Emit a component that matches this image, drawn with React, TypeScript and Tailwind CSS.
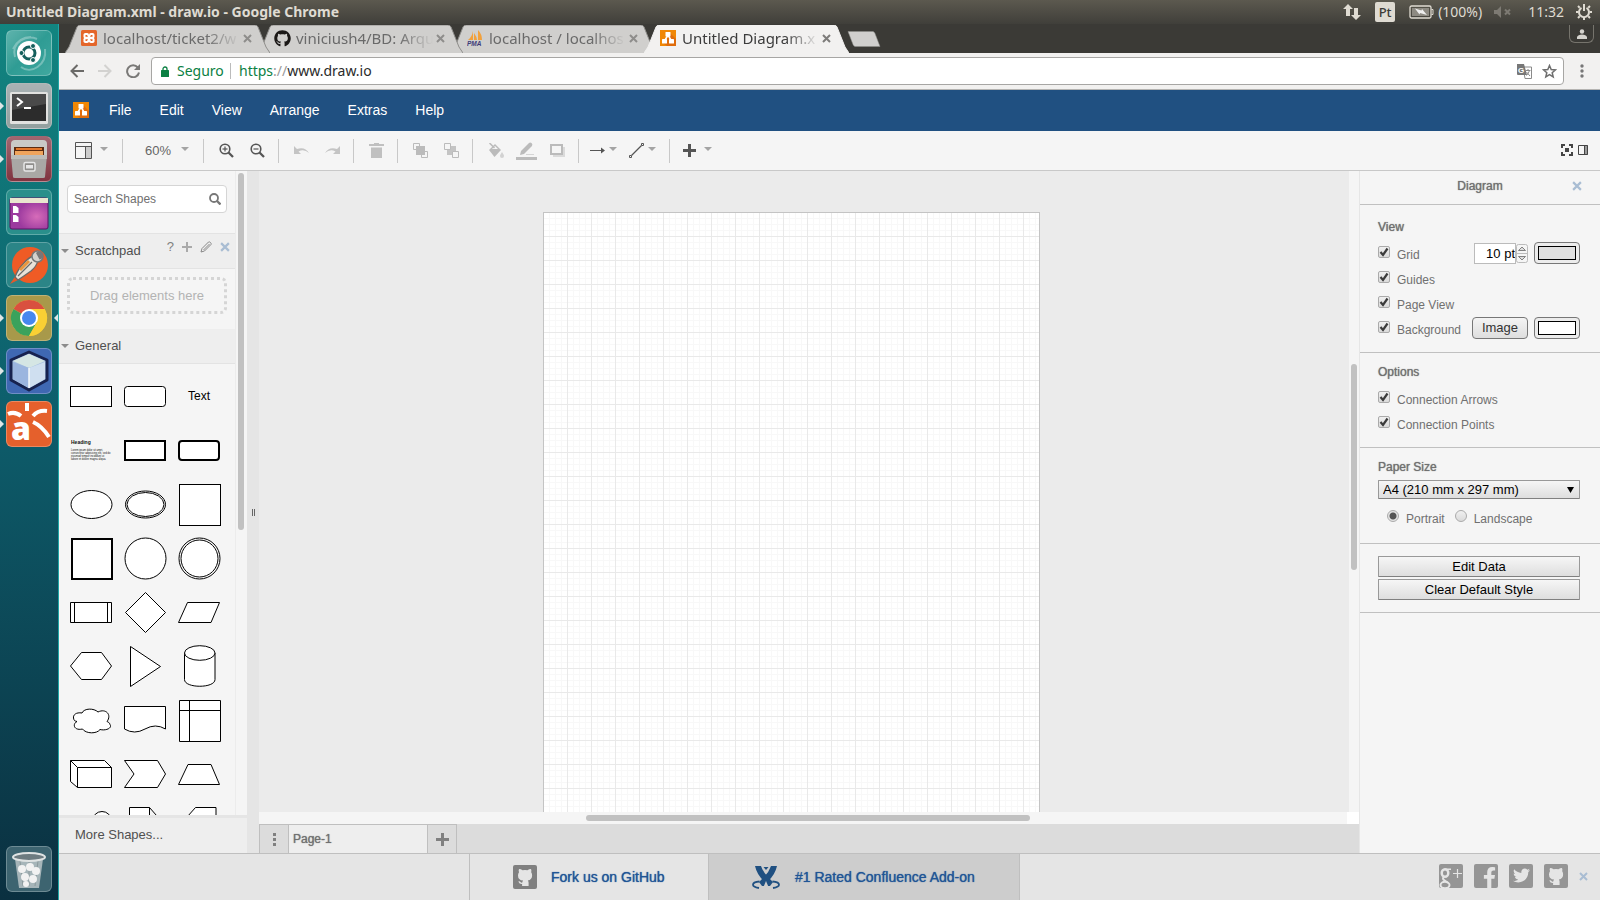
import React from "react";
import { FaGithub, FaFacebookF, FaTwitter } from "react-icons/fa";

const ubuntu = "font-['Noto_Sans',sans-serif]";
const fauxBold = "[text-shadow:0_0_1px_currentColor]";

/* ---------- small shared drawings ---------- */

function DrawioLogo() {
  return (
    <svg width="16" height="16" viewBox="0 0 16 16" aria-hidden="true">
      <rect width="16" height="16" fill="#f08705" />
      <path d="M11 4L16 9v7H7l-4-3z" fill="#df6c0c" />
      <path d="M8 5L4.500 11M8 5l3.500 6" stroke="#fff" strokeWidth="1.500" />
      <rect x="5.500" y="2" width="5" height="4.500" rx=".6" fill="#fff" />
      <rect x="2" y="9" width="5" height="4.500" rx=".6" fill="#fff" />
      <rect x="9" y="9" width="5" height="4.500" rx=".6" fill="#fff" />
    </svg>
  );
}

function XamppLogo() {
  return (
    <svg width="16" height="16" viewBox="0 0 16 16" aria-hidden="true">
      <rect width="16" height="16" rx="1.500" fill="#e4662a" />
      <g fill="#fff">
        <rect x="2.500" y="3" width="5.500" height="5.500" rx="1.800" />
        <rect x="8" y="3" width="5.500" height="5.500" rx="1.800" />
        <rect x="2.500" y="7.500" width="5.500" height="5.500" rx="1.800" />
        <rect x="8" y="7.500" width="5.500" height="5.500" rx="1.800" />
        <rect x="6" y="6" width="4" height="4" />
      </g>
      <g fill="#e4662a">
        <path d="M4.500 5h1.500l1 1.800H4.500zM11.500 5H10L9 6.800h2.500zM4.500 11h1.500l1-1.800H4.500zM11.500 11H10L9 9.200h2.500z" />
      </g>
    </svg>
  );
}

function Octocat() {
  return (
    <svg width="24" height="24" viewBox="0 0 24 24" fill="currentColor" aria-hidden="true">
      <path d="M6 4q2 0 3.500 1.200 2.500-.5 5 0Q16 4 18 4q.7 1.600.2 3.200 1 1.200.9 3.200 0 4.200-4.300 5 .8.800.8 2.300V21h-6.500v-2Q6.500 19.300 5.300 16.500q1.500-.5 2.200.6.600.700 1.800.500.100-1.200.8-2Q5 15 5 10.400q0-2 1-3.200Q5.300 5.600 6 4z" />
    </svg>
  );
}

function Caret() {
  return (
    <svg width="8" height="4" viewBox="0 0 8 4" className="mb-1 shrink-0" aria-hidden="true">
      <path d="M0 0h8L4 4z" fill="#a4a4a4" />
    </svg>
  );
}

function Cross({ size, color }: { size: number; color: string }) {
  return (
    <svg width={size} height={size} viewBox="0 0 9 9" aria-hidden="true">
      <path d="M1 1l7 7M8 1L1 8" stroke={color} strokeWidth="2" />
    </svg>
  );
}

/* ---------- desktop panel ---------- */

function DesktopPanel() {
  return (
    <header className={`flex h-6 shrink-0 items-center justify-between bg-linear-to-b from-[#5c594f] to-[#403f3a] pl-1.5 pr-2 text-[#dfdbd2] ${ubuntu}`}>
      <span className="text-sm font-bold leading-6">Untitled Diagram.xml - draw.io - Google Chrome</span>
      <div className="flex items-center text-sm leading-6">
        <svg width="18" height="18" viewBox="0 0 18 18" className="mr-3.5" fill="#dfdbd2">
          <path d="M5 1l5 5H7v7H3V6H0zM13 17l-5-5h3V5h4v7h3z" />
        </svg>
        <span className="mr-3.5 flex h-5 w-5 items-center justify-center rounded-xs bg-[#dfdbd2] text-[13px] font-medium text-[#3c3b37]">Pt</span>
        <svg width="25" height="14" viewBox="0 0 25 14" className="mr-1">
          <rect x="1" y="1" width="21" height="12" rx="1.500" fill="none" stroke="#dfdbd2" strokeWidth="1.300" />
          <rect x="3" y="3" width="17" height="8" fill="#8d8a82" />
          <path d="M22.500 4.500h1.500v5h-1.500" fill="none" stroke="#dfdbd2" />
          <path d="M6 3.500l6.500 2 .5-1.500 5 6-7-2-.5 1.500z" fill="#eee" />
        </svg>
        <span className="mr-3">(100%)</span>
        <svg width="18" height="14" viewBox="0 0 18 14" className="mr-4">
          <path d="M0 5h3l4-4v12L3 9H0z" fill="#7d7a73" />
          <path d="M11 4.500l5 5M16 4.500l-5 5" stroke="#7d7a73" strokeWidth="2" />
        </svg>
        <span className="mr-3">11:32</span>
        <svg width="16" height="16" viewBox="0 0 16 16" fill="none" stroke="#dfdbd2">
          <path d="M5.500 3.800a5 5 0 1 0 5 0" strokeWidth="2" />
          <path d="M8 0v7" strokeWidth="2" />
          <path d="M2 2l1.700 1.700M14 2l-1.700 1.700M0 8h2.500M13.500 8H16M2 14l1.700-1.700M14 14l-1.700-1.700M8 13v3" strokeWidth="2" />
        </svg>
      </div>
    </header>
  );
}

/* ---------- launcher ---------- */

function LauncherTile({ label, tone, running, focused, children }: { label: string; tone: string; running?: boolean; focused?: boolean; children: React.ReactNode }) {
  return (
    <div className="flex items-center">
      <svg width="6" height="8" viewBox="0 0 6 8" className="shrink-0">
        {running && <path d="M0 0l4 4-4 4z" fill="#dfe6e6" />}
      </svg>
      <button type="button" aria-label={label} className={`flex h-[46px] w-[46px] shrink-0 items-center justify-center rounded-md border border-white/25 ${tone}`}>
        <svg width="44" height="44" viewBox="0 0 44 44" className="overflow-visible" aria-hidden="true">{children}</svg>
      </button>
      <svg width="6" height="8" viewBox="0 0 6 8" className="shrink-0">
        {focused && <path d="M6 0L2 4l4 4z" fill="#dfe6e6" />}
      </svg>
    </div>
  );
}

function Launcher() {
  return (
    <nav aria-label="Launcher" className="flex w-[59px] shrink-0 flex-col justify-between border-r border-[#1fa5a5] bg-linear-to-b from-[#128580] via-[#0d5d6b] via-45% to-[#0a3040] pb-2 pt-1.5">
      <div className="flex flex-col gap-[7px]">
        <LauncherTile label="Search" tone="bg-linear-to-br from-[#5db3ac] via-[#2f9c94] to-[#3fa79f]">
          <path d="M8 26C4 10 20 4 30 8M14 36C24 44 40 34 38 18M6 18c4-8 10-12 18-12" fill="none" stroke="#fff" strokeOpacity=".3" strokeWidth="2" />
          <circle cx="22" cy="22" r="12" fill="#fff" />
          <circle cx="22" cy="22" r="6" fill="none" stroke="#155f5c" strokeWidth="3" />
          <g fill="#155f5c" stroke="#fff" strokeWidth="1"><circle cx="14.500" cy="22" r="2.500" /><circle cx="26" cy="15" r="2.500" /><circle cx="26" cy="29" r="2.500" /></g>
        </LauncherTile>
        <LauncherTile label="Terminal" running tone="bg-linear-to-b from-[#a9b2b4] to-[#93a09f]">
          <rect x="3" y="8" width="38" height="32" rx="1.500" fill="#e2e2e0" />
          <rect x="5" y="10" width="34" height="27" fill="#2c2c2c" />
          <path d="M5 10h34v10L5 26z" fill="#4a4a4a" />
          <path d="M10 14l5 4-5 4M17 24h7" fill="none" stroke="#fff" strokeWidth="2" />
        </LauncherTile>
        <LauncherTile label="Files" running tone="bg-linear-to-b from-[#a06670] to-[#803440]">
          <path d="M4 7q0-4 4-4h28q4 0 4 4v12H4z" fill="#c9c9c6" />
          <path d="M7 10h30v9H7z" fill="#5b2b10" />
          <path d="M9 11h26v2H9z" fill="#e2762b" /><path d="M8 14h28v5H8z" fill="#f0a45c" />
          <path d="M4 18h36l-2 22q0 1-2 1H8q-2 0-2-1z" fill="#a9a8a5" />
          <path d="M4 18h36v4H4z" fill="#bdbcb9" />
          <rect x="17" y="25.500" width="11" height="8.500" rx="1.500" fill="#8f8e8b" stroke="#e6e6e6" strokeWidth="1.500" />
          <rect x="19" y="28" width="7" height="3.500" fill="#e6e6e6" />
        </LauncherTile>
        <LauncherTile label="Workspace" tone="bg-[#2a8f8b]">
          <defs><radialGradient id="ws" cx=".7" cy=".6"><stop offset="0" stopColor="#d66cb9" /><stop offset="1" stopColor="#9c3a9f" /></radialGradient></defs>
          <rect x="3" y="8" width="38" height="31" rx="2" fill="url(#ws)" stroke="#5a1465" />
          <path d="M3 8h38v5H3z" fill="#e9e5cf" />
          <path d="M6 16h3l2.500 2v5H6zM6 25h3l2.500 2v5H6z" fill="#fff" />
        </LauncherTile>
        <LauncherTile label="Postman" tone="bg-[#2b8587]">
          <circle cx="23" cy="22" r="18" fill="#ef5b25" />
          <path d="M3 41l6-9 4 4z" fill="#e2592b" />
          <path d="M8 34q3-8 9-14 5-6 10-7l4 4q-1 6-7 11-7 5-13 9z" fill="#e8e2d8" stroke="#6a6a68" strokeWidth="1.300" />
          <path d="M13 27l9-9" stroke="#e9953d" strokeWidth="3" />
          <path d="M11 33l14-14" stroke="#6a6a68" strokeWidth="1.300" />
          <circle cx="30.500" cy="13.500" r="5.500" fill="#d4d1cc" stroke="#777" strokeWidth="1.500" />
          <path d="M29 10a4 4 0 1 1 3.500 6.500z" fill="#777" />
        </LauncherTile>
        <LauncherTile label="Chrome" running focused tone="bg-[#a8994a]">
          <circle cx="22" cy="22" r="18" fill="#f6c934" />
          <path d="M22 22L6.400 13A18 18 0 0 1 37.600 13z" fill="#d9503f" />
          <path d="M6.400 13A18 18 0 0 0 22 40l7.800-13.500L22 22z" fill="#3ba25c" />
          <path d="M22 13h15.600A18 18 0 0 1 22 40l8-14z" fill="#f9d034" />
          <circle cx="22" cy="22" r="9" fill="#fff" /><circle cx="22" cy="22" r="7" fill="#4687ee" />
        </LauncherTile>
        <LauncherTile label="NetBeans" running tone="bg-[#3f68b3]">
          <path d="M22 3L40 11v20L22 41 4 31V11z" fill="#a9c2e2" stroke="#17224f" strokeWidth="3" strokeLinejoin="round" />
          <path d="M22 5L38 12 22 19 6 12z" fill="#d5e6e4" />
          <path d="M6 13l16 6v20L6 30z" fill="#9bb5df" />
          <path d="M38 13l-16 6v20l16-9z" fill="#cfdff0" />
          <path d="M22 19v20" stroke="#f4f8fb" strokeWidth="1.500" />
        </LauncherTile>
        <LauncherTile label="Astah" running tone="bg-[#e5602c]">
          <path d="M20 1v8M1 12q7-3 13 2M40 9q-9-1-14 5M26 20q9 4 16 15" fill="none" stroke="#fff" strokeWidth="4" />
          <text x="4" y="38" fontFamily="Open Sans" fontWeight="800" fontSize="32" fill="#fff">a</text>
        </LauncherTile>
      </div>
      <LauncherTile label="Trash" tone="bg-[#3d6470]">
        <path d="M8 12h28l-4 29H12z" fill="#c9d0d1" fillOpacity=".75" />
        <path d="M13 14l3 25M22 14v25M31 14l-3 25" stroke="#8b999c" />
        <g fill="#f2f2f2"><circle cx="15" cy="22" r="4" /><circle cx="23" cy="20" r="4" /><circle cx="29" cy="24" r="4" /><circle cx="18" cy="30" r="4" /><circle cx="26" cy="32" r="4" /><circle cx="19" cy="37" r="3" /></g>
        <ellipse cx="22" cy="10" rx="16" ry="4" fill="#6d7b80" stroke="#dfe3e3" strokeWidth="2" />
      </LauncherTile>
    </nav>
  );
}

/* ---------- browser chrome ---------- */

function BrowserTab({ icon, title, layer, active }: { icon: React.ReactNode; title: string; layer: string; active?: boolean }) {
  return (
    <div className={`relative -mr-3 h-7 w-[205px] shrink-0 ${layer}`}>
      <svg className="absolute inset-0 h-full w-full" viewBox="0 0 205 28" preserveAspectRatio="none" aria-hidden="true">
        <path d="M0 28L4 22 12 2q1-2 3-2H190q2 0 3 2L201 22l4 6" fill={active ? "#f2f1f0" : "#d0cfcd"} stroke={active ? "#f2f1f0" : "#8f8e8b"} />
      </svg>
      <div className="relative flex h-full items-center pb-0.5 pl-4 pr-4">
        <span className="flex w-[22px] shrink-0">{icon}</span>
        <span className={`w-[137px] shrink-0 whitespace-nowrap text-[15px] leading-6 [mask-image:linear-gradient(to_right,black_75%,transparent)] ${active ? "text-[#3c3c3c]" : "text-[#6a6a6a]"}`}>{title}</span>
        <button type="button" aria-label={`Close ${title}`} className="ml-[3px] shrink-0"><Cross size={9} color={active ? "#7d7c7a" : "#8e8d8b"} /></button>
      </div>
    </div>
  );
}

function TabStrip() {
  return (
    <div className={`flex h-[29px] shrink-0 items-end justify-between bg-[#3b3a36] pl-1.5 pr-1.5 ${ubuntu}`}>
      <div className="flex">
        <BrowserTab layer="z-30" title="localhost/ticket2/w" icon={<XamppLogo />} />
        <BrowserTab layer="z-20" title="viniciush4/BD: Arqu" icon={<FaGithub size={17} color="#1b1817" />} />
        <BrowserTab layer="z-10" title="localhost / localhos" icon={
          <svg width="17" height="16" viewBox="0 0 17 16">
            <path d="M6 1v9H1q4-3 5-9zM7 3q3 4 3 7H7zM11 0q4 4 4 10h-4z" fill="#f2a13c" />
            <text x="0" y="15.500" fontFamily="Liberation Sans" fontStyle="italic" fontWeight="700" fontSize="6.500" fill="#3f3c78">PMA</text>
          </svg>} />
        <BrowserTab layer="z-40" active title="Untitled Diagram.x" icon={<DrawioLogo />} />
        <button type="button" aria-label="New tab" className="ml-2.5 self-center">
          <svg width="34" height="16" viewBox="0 0 34 16"><path d="M1 .5h25q1 0 2 2l5 13H8q-1 0-2-2z" fill="#d0cfcd" stroke="#8f8e8b" strokeWidth=".5" /></svg>
        </button>
      </div>
      <button type="button" aria-label="User" className="mb-2.5 flex h-[18px] w-[25px] items-center justify-center rounded-b-md border border-t-0 border-[#76746d]">
        <svg width="10" height="10" viewBox="0 0 10 10" fill="#d5d3ce"><circle cx="5" cy="2.500" r="2.200" /><path d="M0 10V8q1-2.500 5-2.500T10 8v2z" /></svg>
      </button>
    </div>
  );
}

function AddressBar() {
  return (
    <div className={`flex h-[37px] shrink-0 items-center border-b border-[#b5b4b2] bg-[#f2f1f0] pl-[11px] pr-4 ${ubuntu}`}>
      <button type="button" aria-label="Back" className="mr-3.5"><svg width="14" height="14" viewBox="0 0 14 14" fill="none" stroke="#6b6a68" strokeWidth="2"><path d="M14 7H2M7.500 1L1.500 7l6 6" /></svg></button>
      <button type="button" aria-label="Forward" className="mr-3.5"><svg width="14" height="14" viewBox="0 0 14 14" fill="none" stroke="#d3d2d0" strokeWidth="2"><path d="M0 7h12M6.500 1l6 6-6 6" /></svg></button>
      <button type="button" aria-label="Reload" className="mr-[11px]"><svg width="14" height="14" viewBox="0 0 14 14"><path d="M11.800 3.500A6 6 0 1 0 13 8.500" fill="none" stroke="#7a7977" strokeWidth="2" /><path d="M14 0v6H8z" fill="#7a7977" /></svg></button>
      <div className="mr-4 flex h-7 min-w-0 flex-1 items-center rounded-sm border border-[#a7a6a4] bg-white pl-[9px] pr-1.5 text-sm">
        <svg width="8" height="11" viewBox="0 0 8 11"><rect y="4" width="8" height="7" rx=".5" fill="#0b8043" /><path d="M2 5V3a2 2 0 0 1 4 0v2" fill="none" stroke="#0b8043" strokeWidth="1.300" /></svg>
        <span className="ml-2 w-[53px] text-[#0b8043]">Seguro</span>
        <span className="mr-2 h-4 w-px bg-[#bbb]" />
        <span className="flex-1 text-[#2b2b2b]"><span className="text-[#0b8043]">https</span><span className="text-[#999]">://</span>www.draw.io</span>
        <svg width="15" height="15" viewBox="0 0 15 15" className="mr-2.5">
          <path d="M6 3h8.500v11.500H8z" fill="#fff" stroke="#8a8a8a" />
          <path d="M0 0h7l3 11H1q-1 0-1-1z" fill="#777" />
          <text x="1" y="9" fontFamily="Liberation Sans" fontWeight="700" fontSize="8" fill="#fff">G</text>
          <path d="M8.500 6.500h5M11 5v1.500M12.500 6.500q-1 3-3 5M9.500 8l3.500 4" stroke="#888" fill="none" />
        </svg>
        <svg width="15" height="15" viewBox="0 0 15 15" fill="none" stroke="#6e6e6e" strokeWidth="1.500"><path d="M7.500 1.500l1.700 4 4.300.4-3.300 2.800 1 4.300-3.700-2.300L3.800 13l1-4.300L1.500 5.900l4.300-.4z" /></svg>
      </div>
      <button type="button" aria-label="Browser menu"><svg width="4" height="14" viewBox="0 0 4 14" fill="#777"><circle cx="2" cy="2" r="1.700" /><circle cx="2" cy="7" r="1.700" /><circle cx="2" cy="12" r="1.700" /></svg></button>
    </div>
  );
}

/* ---------- draw.io bars ---------- */

function MenuBar() {
  return (
    <div className="flex h-[41px] shrink-0 items-center bg-[#205081] pb-0.5 pl-3.5">
      <DrawioLogo />
      <div className="ml-1.5 flex">
        {["File", "Edit", "View", "Arrange", "Extras", "Help"].map((m) => (
          <button key={m} type="button" className="px-3.5 text-sm text-white">{m}</button>
        ))}
      </div>
    </div>
  );
}

function Divider() {
  return <span className="h-6 w-px shrink-0 bg-[#c8c8c8]" />;
}

function Tool({ label, children }: { label: string; children: React.ReactNode }) {
  return (
    <button type="button" aria-label={label} className="flex w-[31px] shrink-0 items-center justify-center">
      {children}
    </button>
  );
}

function ToolGroup({ children }: { children: React.ReactNode }) {
  return (
    <>
      <div className="flex pl-[7px] pr-[5px]">{children}</div>
      <Divider />
    </>
  );
}

function Magnifier({ plus }: { plus?: boolean }) {
  return (
    <svg width="15" height="15" viewBox="0 0 15 15" fill="none" stroke="#555">
      <circle cx="6" cy="6" r="4.800" strokeWidth="1.600" />
      <path d="M9.500 9.500l4.500 4.500" strokeWidth="2.300" />
      <path d="M3.500 6h5" strokeWidth="1.200" />
      {plus && <path d="M6 3.500v5" strokeWidth="1.200" />}
    </svg>
  );
}

function ToolBar() {
  return (
    <div className="flex h-10 shrink-0 items-center border-b border-[#c8c8c8] bg-[#f5f5f5]">
      <button type="button" aria-label="View" className="flex w-[63px] items-center gap-2 pl-4">
        <svg width="17" height="17" viewBox="0 0 17 17"><path d="M11 5h5v11h-5z" fill="#ccc" /><path d="M.5.5h16v16H.5zM.5 4.500h16M10.500 4.500v12" fill="none" stroke="#555" /></svg>
        <Caret />
      </button>
      <Divider />
      <button type="button" className="flex w-20 items-center gap-2.5 pl-[22px] text-[13px] text-[#666]">60%<Caret /></button>
      <Divider />
      <ToolGroup>
        <Tool label="Zoom in"><Magnifier plus /></Tool>
        <Tool label="Zoom out"><Magnifier /></Tool>
      </ToolGroup>
      <ToolGroup>
        <Tool label="Undo"><svg width="15" height="9" viewBox="0 0 15 9"><path d="M0 0v8h7L4.500 5.500Q10 2.500 15 7 11 .500 3 3z" fill="#c4c4c4" /></svg></Tool>
        <Tool label="Redo"><svg width="15" height="9" viewBox="0 0 15 9"><path d="M15 0v8H8l2.500-2.500Q5 2.500 0 7 4 .500 12 3z" fill="#c4c4c4" /></svg></Tool>
      </ToolGroup>
      <ToolGroup>
        <Tool label="Delete"><svg width="15" height="15" viewBox="0 0 15 15" fill="#c0c0c0"><path d="M0 1h5V0h5v1h5v2H0zM2 4.500h11V15H2z" /></svg></Tool>
      </ToolGroup>
      <ToolGroup>
        <Tool label="To front"><svg width="15" height="15" viewBox="0 0 15 15"><path d="M3.500 6.500H.5v-6h6v3M11.500 8.500h3v6h-6v-3" fill="none" stroke="#bbb" /><path d="M3 3h9v9H3z" fill="#bbb" /></svg></Tool>
        <Tool label="To back"><svg width="15" height="15" viewBox="0 0 15 15"><path d="M3 3h9v9H3z" fill="#c4c4c4" /><path d="M.5.5h6v6h-6zM8.500 8.500h6v6h-6z" fill="#f5f5f5" stroke="#bbb" /></svg></Tool>
      </ToolGroup>
      <ToolGroup>
        <Tool label="Fill colour"><svg width="16" height="15" viewBox="0 0 16 15"><path d="M1 7l6-6 6 6-6.500 7z" fill="#bbb" /><path d="M4 6l3-3 3 3z" fill="#f5f5f5" /><path d="M1.500 0l5 5" stroke="#bbb" strokeWidth="1.500" /><path d="M14 9q2 3 2 4a2 2 0 0 1-4 0q0-1 2-4z" fill="#d2d2d2" /></svg></Tool>
        <Tool label="Line colour"><svg width="21" height="18" viewBox="0 0 21 18"><path d="M0 15h21v3H0z" fill="#bbb" /><path d="M4 13l1-4 8-8q1-1 2.500 0t.500 3l-8 8z" fill="#bbb" /><path d="M10 12h8v1h-8z" fill="#d5d5d5" /></svg></Tool>
        <Tool label="Shadow"><svg width="15" height="13" viewBox="0 0 15 13"><path d="M3 3h12v10H3z" fill="#dadada" /><path d="M1 1h11v9H1z" fill="#f5f5f5" stroke="#bbb" strokeWidth="2" /></svg></Tool>
      </ToolGroup>
      <ToolGroup>
        <button type="button" aria-label="Connection" className="flex w-[39px] items-center gap-1 pl-1"><svg width="15" height="7" viewBox="0 0 15 7"><path d="M0 3.500h12" stroke="#555" /><path d="M11 .5l4 3-4 3z" fill="#555" /></svg><Caret /></button>
        <button type="button" aria-label="Waypoints" className="flex w-[39px] items-center gap-1 pl-1"><svg width="15" height="15" viewBox="0 0 15 15" fill="none" stroke="#555"><path d="M2.500 12.500l10-10" strokeWidth="1.200" /><path d="M.5 12.500h2v2h-2zM12.500.5h2v2h-2z" fill="#f5f5f5" /></svg><Caret /></button>
      </ToolGroup>
      <button type="button" aria-label="Insert" className="flex items-center gap-2 pl-[13px]"><svg width="13" height="13" viewBox="0 0 13 13"><path d="M6.500 0v13M0 6.500h13" stroke="#555" strokeWidth="3" /></svg><Caret /></button>
      <div className="ml-auto flex items-center gap-[5px] pb-0.5 pr-3">
        <button type="button" aria-label="Fullscreen"><svg width="12" height="12" viewBox="0 0 12 12"><path d="M1 4V1h3M8 1h3v3M11 8v3H8M4 11H1V8" fill="none" stroke="#444" strokeWidth="2" /><path d="M4 4h4v4H4z" fill="#444" /></svg></button>
        <button type="button" aria-label="Format panel"><svg width="10" height="10" viewBox="0 0 10 10"><path d="M7 0h3v10H7z" fill="#999" /><path d="M.5.5h9v9h-9zM6.500.5v9" fill="none" stroke="#444" /></svg></button>
      </div>
    </div>
  );
}

/* ---------- shape palette ---------- */

const shapes: React.ReactNode[] = [
  <rect x="6.500" y="17.500" width="41" height="20" />,
  <rect x="6.500" y="17.500" width="41" height="20" rx="3" />,
  <text x="27" y="31" fontSize="12" textAnchor="middle" fill="#000" stroke="none">Text</text>,
  <g fill="#111" stroke="none">
    <text x="7" y="21" fontSize="5" fontWeight="700">Heading</text>
    <g fontSize="2.600"><text x="7" y="28">Lorem ipsum dolor sit amet,</text><text x="7" y="31">consectetur adipisicing elit, sed do</text><text x="7" y="34">eiusmod tempor incididunt ut</text><text x="7" y="37">labore et dolore magna aliqua.</text></g>
  </g>,
  <rect x="7" y="18" width="40" height="19" strokeWidth="2" />,
  <rect x="7" y="18" width="40" height="19" rx="3" strokeWidth="2" />,
  <ellipse cx="27.500" cy="27.500" rx="20.500" ry="14" />,
  <g><ellipse cx="27.500" cy="27.500" rx="20" ry="13.500" /><ellipse cx="27.500" cy="27.500" rx="18.500" ry="12" /></g>,
  <rect x="7.500" y="7.500" width="41" height="41" />,
  <rect x="8" y="8" width="40" height="40" strokeWidth="2" />,
  <circle cx="27.500" cy="27.500" r="20.500" />,
  <g><circle cx="27.500" cy="27.500" r="20.500" /><circle cx="27.500" cy="27.500" r="18.500" /></g>,
  <path d="M6.500 17.500h41v20h-41zM10.500 17.500v20M43.500 17.500v20" />,
  <path d="M27.500 7.500l20 20-20 20-20-20z" />,
  <path d="M15.500 17.500h32l-8.500 20h-32.500z" />,
  <path d="M6.500 27l11-13.500h20l10 13.500-10 13.500h-20z" />,
  <path d="M12.500 7.500L42.500 27.500l-30 20z" />,
  <g><path d="M12.500 14v26.500c0 9 30.500 9 30.500 0V14" /><ellipse cx="27.750" cy="14" rx="15.250" ry="7.300" /></g>,
  <path d="M18 20C12 19 9 22 9.500 25S11 28 13 28.500C8 31 10 38 18.500 36C22 41 33 41 36 36.500C42 38 48.500 35 46 31.500C45.500 29.500 44 29 43 28.500C48 22 42 15 34 19C30 15 20 15 18 20z" />,
  <path d="M6.500 13.500h41V36q-10-6-20.500 0T6.500 36z" />,
  <path d="M7.500 7.500h41v41h-41zM7.500 17.500h41M17.500 7.500v41" />,
  <path d="M6.500 13.500h34l7 7v20h-34l-7-6zM6.500 13.500l7 7v20M13.500 20.500h34" />,
  <path d="M6.500 13.500h33l8 13.500-8 13.500h-33L16 27z" />,
  <path d="M6.500 37.500l9.500-20h23l8.500 20z" />,
  <circle cx="38" cy="20" r="9.500" />,
  <path d="M11.500 6.500h20l7 8v24h-27zM31.500 6.500v8h7" />,
  <path d="M15.500 15.500l8-9h20.500v40H15.500z" />,
];

function SectionHeader({ title, children }: { title: string; children?: React.ReactNode }) {
  return (
    <div className="flex h-[35px] shrink-0 items-center border-b border-[#e3e3e3] bg-[#eee] pl-0.5 pr-[5px] text-[13px] text-[#505050]">
      <svg width="8" height="4" viewBox="0 0 8 4" className="mr-1.5"><path d="M0 0h8L4 4z" fill="#8c8c8c" /></svg>
      <button type="button" className="flex-1 text-left">{title}</button>
      {children}
    </div>
  );
}

function Palette() {
  return (
    <aside aria-label="Shapes" className="flex w-[188px] shrink-0 flex-col bg-[#f5f5f5]">
      <div className="flex min-h-0 flex-1">
        <div className="flex w-44 flex-col overflow-hidden">
          <div className="ml-2 mr-2 mt-3.5 flex h-7 shrink-0 items-center rounded-sm border border-[#d5d5d5] bg-white pl-1.5 pr-[5px]">
            <input type="text" aria-label="Search Shapes" placeholder="Search Shapes" className="min-w-0 flex-1 bg-transparent text-xs outline-none placeholder:text-[#707070]" />
            <svg width="12" height="12" viewBox="0 0 12 12" fill="none" stroke="#777"><circle cx="5" cy="5" r="4" strokeWidth="1.800" /><path d="M8 8l3.500 3.500" strokeWidth="2.300" /></svg>
          </div>
          <div className="mt-5 shrink-0 border-t border-[#e3e3e3]">
            <SectionHeader title="Scratchpad">
              <div className="mb-2 flex items-center gap-2">
                <button type="button" className="text-[13px] text-[#808080]">?</button>
                <button type="button" aria-label="Add"><svg width="10" height="10" viewBox="0 0 10 10"><path d="M5 0v10M0 5h10" stroke="#aaa" strokeWidth="2" /></svg></button>
                <button type="button" aria-label="Edit scratchpad"><svg width="12" height="12" viewBox="0 0 12 12" fill="none" stroke="#888"><path d="M1 11l1-3.500L8.500 1q1-.5 2 .5t.5 2L4.500 10zM3.500 9L9.500 3" /></svg></button>
                <button type="button" aria-label="Close scratchpad"><Cross size={10} color="#a9bdd3" /></button>
              </div>
            </SectionHeader>
          </div>
          <div className="mx-2 mt-2 flex h-[37px] shrink-0 items-center justify-center rounded-md border-3 border-dotted border-[#d5d5d5] text-[13px] text-[#b3b3b3]">Drag elements here</div>
          <div className="mt-[15px] shrink-0"><SectionHeader title="General" /></div>
          <div className="grid shrink-0 grid-cols-[54px_54px_54px] px-[5px] pt-[5px]">
            {shapes.map((s, i) => (
              <svg key={i} width="54" height="54" viewBox="0 0 54 54" fill="#fff" stroke="#000" fontFamily="Liberation Sans">{s}</svg>
            ))}
          </div>
        </div>
        <div className="flex-1 border-l border-[#ececec] pl-[2px] pt-0.5">
          <div className="h-[357px] w-1.5 rounded-full bg-[#c1c1c1]" />
        </div>
      </div>
      <button type="button" className="h-[38px] shrink-0 border-t-3 border-[#e5e5e5] bg-[#eee] pb-0.5 pl-4 text-left text-[13px] text-[#505050]">More Shapes...</button>
    </aside>
  );
}

/* ---------- canvas ---------- */

function Canvas() {
  return (
    <main className="flex min-w-0 flex-1 flex-col">
      <div className="flex min-h-0 flex-1">
        <div className="flex min-w-0 flex-1 justify-center bg-[#ebebeb] pr-[25px] pt-[41px]">
          <div className="w-[497px] border border-b-0 border-[#c4c4c4] bg-white bg-[linear-gradient(to_right,transparent_23px,#e9e9e9_23px),linear-gradient(to_bottom,transparent_23px,#e9e9e9_23px),linear-gradient(to_right,transparent_5px,#f8f8f8_5px),linear-gradient(to_bottom,transparent_5px,#f8f8f8_5px)] bg-[size:24px_24px,24px_24px,6px_6px,6px_6px]" />
        </div>
        <div className="w-2.5 bg-[#f5f5f5] pl-0.5 pt-[193px]">
          <div className="h-[206px] w-1.5 rounded-full bg-[#c1c1c1]" />
        </div>
      </div>
      <div className="flex h-3 shrink-0">
        <div className="flex flex-1 items-center justify-center bg-[#f5f5f5] pl-[9px]">
          <div className="h-1.5 w-[444px] rounded-full bg-[#c1c1c1]" />
        </div>
        <div className="w-3 bg-white" />
      </div>
      <div className="flex h-[29px] shrink-0 bg-[#dcdcdc] text-xs text-[#707070]">
        <button type="button" aria-label="Pages" className="flex w-[30px] items-center justify-center border border-b-0 border-[#bfbfbf]">
          <svg width="3" height="13" viewBox="0 0 3 13" fill="#808080"><path d="M0 0h3v3H0zM0 5h3v3H0zM0 10h3v3H0z" /></svg>
        </button>
        <button type="button" className={`w-[138px] border-t border-[#bfbfbf] bg-[#eee] pl-1 text-left ${fauxBold}`}>Page-1</button>
        <button type="button" aria-label="Insert page" className="flex w-[30px] items-center justify-center border border-b-0 border-[#bfbfbf]">
          <svg width="13" height="13" viewBox="0 0 13 13"><path d="M6.500 0v13M0 6.500h13" stroke="#808080" strokeWidth="3" /></svg>
        </button>
      </div>
    </main>
  );
}

/* ---------- format panel ---------- */

function CheckRow({ id, label, children }: { id: string; label: string; children?: React.ReactNode }) {
  return (
    <div className="flex h-[25px] items-center">
      <span className="mb-0.5 grid">
        <input id={id} type="checkbox" defaultChecked className="col-start-1 row-start-1 h-3 w-3 appearance-none rounded-xs border border-[#aaa] bg-linear-to-b from-[#f0f0f0] to-[#dadada]" />
        <svg width="12" height="12" viewBox="0 0 12 12" className="pointer-events-none col-start-1 row-start-1"><path d="M2.500 6l2.500 3 4.500-6.500" fill="none" stroke="#3c3c3c" strokeWidth="2.200" /></svg>
      </span>
      <label htmlFor={id} className="flex-1 pl-[7px] pt-1">{label}</label>
      {children}
    </div>
  );
}

function ColorButton({ label, fill }: { label: string; fill: string }) {
  return (
    <button type="button" aria-label={label} className="ml-1.5 flex h-[22px] w-[46px] rounded-sm border border-[#777] bg-[#ececec] p-[3px]">
      <span className={`flex-1 border border-black ${fill}`} />
    </button>
  );
}

const wideButton = "h-[21px] w-full rounded-[1px] border border-[#999] border-b-[#808080] bg-linear-to-b from-[#f6f6f6] to-[#dedede] text-[13px] leading-none text-black";

function FormatPanel() {
  return (
    <aside aria-label="Format" className="w-[241px] shrink-0 border-l border-[#e6e6e6] bg-[#f5f5f5] text-xs leading-5 text-[#707070]">
      <div className="flex h-[34px] items-center border-b border-[#c0c0c0] pb-1 pr-[18px]">
        <h2 className={`flex-1 pl-7 text-center ${fauxBold}`}>Diagram</h2>
        <button type="button" aria-label="Close panel"><Cross size={10} color="#a9bdd3" /></button>
      </div>
      <section className="border-b border-[#c0c0c0] pb-3 pl-[18px] pr-5 pt-3">
        <h3 className={`mb-[3px] ${fauxBold}`}>View</h3>
        <CheckRow id="grid" label="Grid">
          <input type="text" aria-label="Grid size" defaultValue="10 pt" className="mt-0.5 h-[21px] w-[42px] border border-[#bbb] bg-white text-right text-[13px] text-black" />
          <svg width="12" height="19" viewBox="0 0 12 19" fill="none" stroke="#bbb" className="mt-0.5">
            <rect x=".5" y=".5" width="11" height="18" rx="2" fill="#f5f5f5" /><path d="M0 9.500h12" />
            <path d="M2.500 6.500h7l-3.500-3.500zM2.500 12.500h7l-3.500 3.500z" stroke="#666" fill="#ddd" strokeWidth=".8" />
          </svg>
          <ColorButton label="Grid colour" fill="bg-[#e0e0e0]" />
        </CheckRow>
        <CheckRow id="guides" label="Guides" />
        <CheckRow id="pageview" label="Page View" />
        <CheckRow id="background" label="Background">
          <button type="button" className="h-[22px] w-14 rounded-sm border border-[#777] bg-linear-to-b from-[#f4f4f4] to-[#dedede] text-[13px] text-[#333]">Image</button>
          <ColorButton label="Background colour" fill="bg-white" />
        </CheckRow>
      </section>
      <section className="border-b border-[#c0c0c0] pb-3 pl-[18px] pr-5 pt-[9px]">
        <h3 className={`mb-[3px] ${fauxBold}`}>Options</h3>
        <CheckRow id="arrows" label="Connection Arrows" />
        <CheckRow id="points" label="Connection Points" />
      </section>
      <section className="border-b border-[#c0c0c0] pb-[11px] pl-[18px] pr-5 pt-[9px]">
        <h3 className={`mb-[3px] ${fauxBold}`}>Paper Size</h3>
        <div className="grid items-center">
          <select aria-label="Paper Size" className="col-start-1 row-start-1 h-[19px] w-full appearance-none rounded-[1px] border border-[#999] border-b-[#808080] bg-linear-to-b from-[#f6f6f6] to-[#dedede] pl-1 text-[13px] leading-[17px] text-black">
            <option>A4 (210 mm x 297 mm)</option>
          </select>
          <svg width="7" height="6" viewBox="0 0 7 6" className="pointer-events-none col-start-1 row-start-1 mr-1.5 justify-self-end"><path d="M0 0h7L3.500 6z" fill="#000" /></svg>
        </div>
        <div className="mt-1.5 flex h-[27px] items-center pl-[9px]">
          <input id="portrait" name="orientation" type="radio" defaultChecked className="mb-1.5 h-3 w-3 appearance-none rounded-full border border-[#aaa] bg-[radial-gradient(circle,#555_3px,#e4e4e4_4px)]" />
          <label htmlFor="portrait" className="pl-[7px] pr-2.5">Portrait</label>
          <input id="landscape" name="orientation" type="radio" className="mb-1.5 h-3 w-3 appearance-none rounded-full border border-[#aaa] bg-linear-to-b from-[#f0f0f0] to-[#dadada]" />
          <label htmlFor="landscape" className="pl-[7px]">Landscape</label>
        </div>
      </section>
      <section className="flex flex-col gap-0.5 border-b border-[#c0c0c0] py-3 pl-[18px] pr-5">
        <button type="button" className={wideButton}>Edit Data</button>
        <button type="button" className={wideButton}>Clear Default Style</button>
      </section>
    </aside>
  );
}

/* ---------- footer ---------- */

function Social({ label, children }: { label: string; children: React.ReactNode }) {
  return (
    <a href="#" aria-label={label} className="flex h-6 w-6 items-end justify-center overflow-hidden rounded-xs bg-[#959595] text-[#e5e5e5]">{children}</a>
  );
}

function Footer() {
  return (
    <footer className="flex h-[47px] shrink-0 border-t border-[#bfbfbf] bg-[#e5e5e5] text-sm text-[#1f5596]">
      <div className="w-[410px]" />
      <a href="#" className={`flex w-[239px] items-center gap-3.5 border-l border-[#bfbfbf] pl-[43px] ${fauxBold}`}>
        <span className="flex h-6 w-6 rounded-xs bg-[#808080] text-[#e5e5e5]"><Octocat /></span>
        Fork us on GitHub
      </a>
      <a href="#" className={`flex w-[312px] items-center gap-[15px] border-x border-[#bfbfbf] bg-[#cdcdcd] pl-[43px] ${fauxBold}`}>
        <svg width="28" height="24" viewBox="0 0 28 24" fill="#205081">
          <path d="M3 1h6q2 6 7 11l5 5-3 4h-3q-1-3-3-5Q5 10 3 1z" />
          <path d="M25 1h-6q-2 6-7 11l-5 5 3 4h3q1-3 3-5 7-6 9-15z" />
          <path d="M11.500 2h5L14 5z" />
          <path d="M14 16l-2.500 6h5z" fill="#cdcdcd" />
          <path d="M7.500 16.500Q1 17 1 19.700q0 2.300 6 3.300M20.500 16.500q6.500.5 6.500 3.200 0 2.300-6 3.300" fill="none" stroke="#205081" strokeWidth="1.800" />
        </svg>
        #1 Rated Confluence Add-on
      </a>
      <div className="flex flex-1 items-center justify-end gap-[11px] pb-0.5 pr-3">
        <Social label="Google Plus">
          <svg width="24" height="24" viewBox="0 0 24 24" fill="none" stroke="currentColor">
            <ellipse cx="6" cy="9" rx="3.300" ry="3.800" strokeWidth="2.400" />
            <path d="M6 5.200h6" strokeWidth="1.600" />
            <path d="M5 13q-2 1.500 0 3t4 3" strokeWidth="2" />
            <ellipse cx="6" cy="21" rx="4.500" ry="3.200" strokeWidth="2" />
            <path d="M18.500 5v9M14 9.500h9" strokeWidth="1.200" />
          </svg>
        </Social>
        <Social label="Facebook"><FaFacebookF size={21} className="-mr-1.5" /></Social>
        <Social label="Twitter"><FaTwitter size={17} className="mb-1" /></Social>
        <Social label="GitHub"><Octocat /></Social>
        <button type="button" aria-label="Close footer"><Cross size={9} color="#a9bdd3" /></button>
      </div>
    </footer>
  );
}

export default function App() {
  return (
    <div className="flex h-screen flex-col overflow-hidden font-['Liberation_Sans',Arial,sans-serif]">
      <DesktopPanel />
      <div className="flex min-h-0 flex-1">
        <Launcher />
        <div className="flex min-w-0 flex-1 flex-col">
          <TabStrip />
          <AddressBar />
          <MenuBar />
          <ToolBar />
          <div className="flex min-h-0 flex-1">
            <Palette />
            <div className="flex w-3 shrink-0 items-center justify-center bg-[#e5e5e5]">
              <svg width="3" height="7" viewBox="0 0 3 7"><path d="M.5 0v7M2.500 0v7" stroke="#666" /></svg>
            </div>
            <Canvas />
            <FormatPanel />
          </div>
          <Footer />
        </div>
      </div>
    </div>
  );
}
